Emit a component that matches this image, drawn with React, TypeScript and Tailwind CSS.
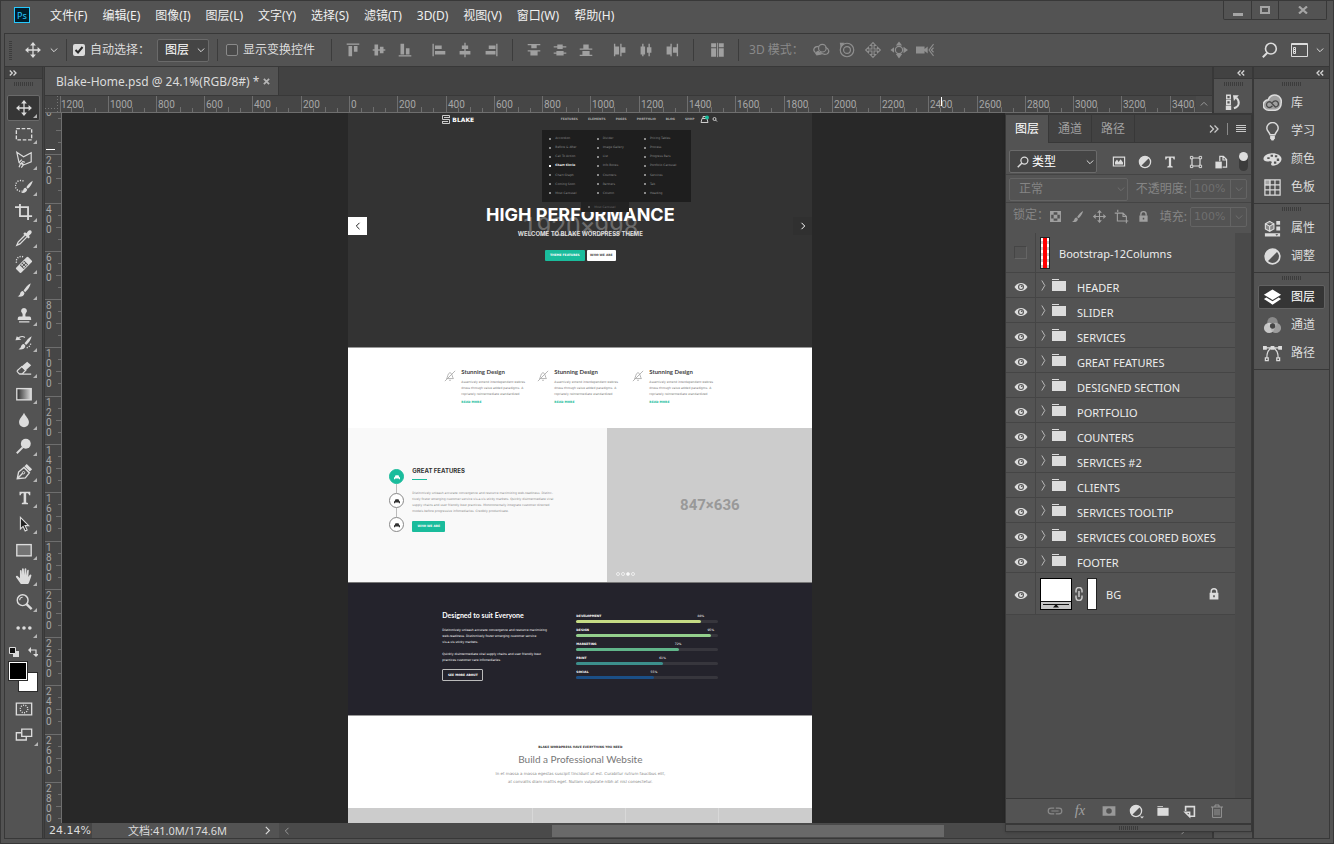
import React from 'react';

type IconProps = { className?: string; children: React.ReactNode };

// 20x20 stroke/fill drawing that takes the text colour
const Glyph: React.FC<IconProps> = ({ className = 'size-5', children }) => (
    <svg viewBox="0 0 20 20" className={`${className} shrink-0`} fill="none" stroke="currentColor" strokeWidth="1.5" aria-hidden="true">
        {children}
    </svg>
);

const solid = { fill: 'currentColor', stroke: 'none' };

const MoveShape = () => (
    <g>
        <path d="M10 4v12M4 10h12" strokeWidth="1.4" />
        <path {...solid} d="M10 1.200l3.200 3.700H6.800zM10 18.800l3.200-3.700H6.800zM1.200 10l3.700-3.200v6.400zM18.800 10l-3.700-3.200v6.400z" />
    </g>
);

const BrushShape = () => (
    <path {...solid} d="M17.500 2.500c-3 1.500-6 5-8 8l1.800 1.900c2.800-2.300 5.500-6.200 6.200-9.900zM8.800 11.200c-2 .2-2.800 1.600-3.200 3.200-.3 1.200-1.200 2-2.800 2.600 3 1 7.200.3 7.800-3.800z" />
);

const TypeShape = () => <path {...solid} d="M4 3h12v4h-1.400c-.3-1.600-.8-2.200-2.400-2.200H11.400v9.400c0 1 .5 1.200 2 1.300V17H6.600v-1.500c1.500-.1 2-.3 2-1.300V4.800H7.800C6.200 4.800 5.700 5.400 5.400 7H4z" />;

const FolderShape = () => (
    <g {...solid}>
        <path d="M3 4h7v1H3z" />
        <path d="M3 6h14v10H3z" />
    </g>
);

const HalfCircleShape = () => (
    <g>
        <circle cx="10" cy="10" r="7" strokeWidth="1.600" />
        <path {...solid} d="M5 15A7 7 0 0 1 15 5z" />
    </g>
);

const LockShape = () => (
    <g>
        <path d="M6.500 9V7a3.500 3.500 0 0 1 7 0v2" strokeWidth="1.800" />
        <path {...solid} fillRule="evenodd" d="M4.500 8.500h11V17h-11zM9 11.500v2.500h2v-2.500z" />
    </g>
);

const Chevron: React.FC<{ className?: string }> = ({ className = 'size-2' }) => (
    <svg viewBox="0 0 8 8" className={`${className} shrink-0`} fill="none" stroke="currentColor" strokeWidth="1" aria-hidden="true">
        <path d="M.8 2.500L4 5.700l3.200-3.200" />
    </svg>
);

const Grip = () => (
    <div className="mx-auto flex h-1 gap-px" aria-hidden="true">
        {Array.from({ length: 10 }, (_, i) => (
            <i key={i} className="h-1 w-px bg-[#3c3c3c]" />
        ))}
    </div>
);

const DoubleArrow: React.FC<{ flip?: boolean }> = ({ flip }) => (
    <svg viewBox="0 0 8 6" className="h-[6px] w-2" fill="none" stroke="#d6d6d6" strokeWidth="1.300" aria-hidden="true">
        <path d={flip ? 'M3.500.5L1 3l2.500 2.500M7.200.5L4.700 3l2.500 2.500' : 'M.8.5L3.300 3 .8 5.500M4.500.5L7 3 4.500 5.500'} />
    </svg>
);

const menus = ['文件(F)', '编辑(E)', '图像(I)', '图层(L)', '文字(Y)', '选择(S)', '滤镜(T)', '3D(D)', '视图(V)', '窗口(W)', '帮助(H)'];

const MenuBar = () => (
    <header className="flex h-8 shrink-0 items-start">
        <div className="ml-[10px] mt-[6px] flex h-4 w-4 items-center justify-center border border-[#26c9ff] bg-[#001d2b] text-[9px] leading-none text-[#26c9ff]">Ps</div>
        <nav className="ml-[13px] flex gap-px">
            {menus.map((menu) => (
                <button key={menu} className="h-[30px] px-[7px] text-[#f0f0f0]">
                    {menu}
                </button>
            ))}
        </nav>
        <div className="ml-auto mr-[3px] flex h-[19px] divide-x divide-[#383838] rounded-b-xs border border-t-0 border-[#383838] text-[#a5a5a5]">
            <button aria-label="最小化" className="flex w-[28px] items-center justify-center pt-2">
                <i className="h-[3px] w-[10px] bg-current" />
            </button>
            <button aria-label="最大化" className="flex w-[27px] items-center justify-center">
                <i className="h-2 w-[10px] border-2 border-current" />
            </button>
            <button aria-label="关闭" className="flex w-[47px] items-center justify-center">
                <svg viewBox="0 0 10 8" className="h-2 w-[10px]" stroke="currentColor" strokeWidth="2.200">
                    <path d="M1 .5l8 7M9 .5l-8 7" />
                </svg>
            </button>
        </div>
    </header>
);

const alignIcons: React.ReactNode[] = [
    <g key="t"><path d="M3 3.500h14" /><path {...solid} d="M5 5.500h4V17H5zM11 5.500h4V12h-4z" /></g>,
    <g key="m"><path d="M3 10h14" /><path {...solid} d="M5 4h4v12H5zM11 6.500h4v7h-4z" /></g>,
    <g key="b"><path d="M3 16.500h14" /><path {...solid} d="M5 3h4v12H5zM11 8h4v7h-4z" /></g>,
    <g key="l"><path d="M3.500 3v14" /><path {...solid} d="M5.500 5H13v4H5.500zM5.500 11H17v4H5.500z" /></g>,
    <g key="c"><path d="M10 2v16" /><path {...solid} d="M6.500 5h7v4h-7zM4 11h12v4H4z" /></g>,
    <g key="r"><path d="M16.500 3v14" /><path {...solid} d="M7.500 5h7.500v4H7.500zM4 11h11v4H4z" /></g>,
];

const distributeIcons: React.ReactNode[] = [
    <g key="t"><path d="M3 4h14M3 11h14" /><path {...solid} d="M7 4h6v4H7zM6 11h8v5H6z" /></g>,
    <g key="v"><path d="M3 6.500h14M3 13.500h14" /><path {...solid} d="M7 4h6v5H7zM6 11h8v5H6z" /></g>,
    <g key="b"><path d="M3 9h14M3 16h14" /><path {...solid} d="M7 4h6v5H7zM6 11h8v5H6z" /></g>,
    <g key="l"><path d="M4 3v14M11 3v14" /><path {...solid} d="M4 6h5v9H4zM11 7h5v6h-5z" /></g>,
    <g key="h"><path d="M6.500 3v14M13.500 3v14" /><path {...solid} d="M4 6h5v9H4zM11 7h5v6h-5z" /></g>,
    <g key="r"><path d="M9 3v14M16 3v14" /><path {...solid} d="M4 6h5v9H4zM11 7h5v6h-5z" /></g>,
];

const modeIcons: React.ReactNode[] = [
    <g key="orbit" strokeWidth="1.300"><circle cx="11.500" cy="8" r="4.200" /><path d="M7.500 6C2 6 .5 10 3.500 12.500M15 7c4 1.500 5 5.500 1.500 7.500-3 1-6-.5-7.500-2.500" /><path {...solid} d="M3 13l4-2.500 4 4.500-6 1z" /></g>,
    <g key="roll" strokeWidth="1.300"><circle cx="10" cy="10" r="7.500" /><circle cx="10" cy="10" r="3.800" /><path {...solid} d="M2 2h5l-4 6z" /></g>,
    <g key="pan" strokeWidth="1.200"><path d="M8.800 8.800V5H7l3-3.200L13 5h-1.800v3.800H15V7l3.200 3-3.200 3v-1.800h-3.800V15H13l-3 3.200L7 15h1.800v-3.800H5V13l-3.200-3L5 7v1.800z" /></g>,
    <g key="slide" strokeWidth="1.300"><circle cx="10" cy="10" r="4" /><path {...solid} d="M6.500 5h7L10 .5zM4.500 7v6L.5 10zM15 6.500v7l5-3.500zM6.500 14.500h7L10 19.500z" /></g>,
    <g key="cam" strokeWidth="1.200"><path {...solid} d="M0 6h9.500v3L13 6v8l-3.500-3v3H0z" /><path d="M19.500 3.500L14.500 10l5 6.500M19.500 7.500L17 10l2.500 2.500" /></g>,
];

const Divider = () => <i className="block h-[22px] w-px shrink-0 bg-[#3c3c3c]" aria-hidden="true" />;

const OptionsBar = () => (
    <section className="flex h-[34px] shrink-0 items-center border border-[#383838]">
        <div className="ml-1 flex flex-col gap-px" aria-hidden="true">
            {Array.from({ length: 10 }, (_, i) => (
                <i key={i} className="h-px w-[3px] bg-[#3c3c3c]" />
            ))}
        </div>
        <button aria-label="移动工具" className="ml-3 flex items-center gap-2">
            <Glyph className="size-[18px]"><MoveShape /></Glyph>
            <Chevron />
        </button>
        <div className="ml-2 flex items-center"><Divider /></div>
        <label className="ml-[6px] flex items-center gap-[5px]">
            <span className="relative flex">
                <input type="checkbox" defaultChecked className="size-3 appearance-none rounded-xs bg-[#dcdcdc]" />
                <svg viewBox="0 0 12 12" className="pointer-events-none absolute inset-0 size-3" fill="none" stroke="#2b2b2b" strokeWidth="2">
                    <path d="M2.500 6L5 8.500l4.500-5.500" />
                </svg>
            </span>
            自动选择：
        </label>
        <span className="relative ml-[7px] flex items-center">
            <select aria-label="自动选择对象" className="h-[23px] w-[52px] appearance-none rounded-xs border border-[#6a6a6a] bg-[#454545] pl-[7px] text-white">
                <option>图层</option>
                <option>组</option>
            </select>
            <Chevron className="pointer-events-none absolute right-1 size-2" />
        </span>
        <div className="ml-2"><Divider /></div>
        <label className="ml-2 flex items-center gap-[5px]">
            <input type="checkbox" className="size-3 appearance-none rounded-xs border border-[#8a8a8a] bg-[#4a4a4a]" />
            显示变换控件
        </label>
        <div className="ml-4"><Divider /></div>
        <div className="ml-3 flex gap-2 text-[#a0a0a0]">
            {alignIcons.map((icon, i) => (
                <button key={i} aria-label="对齐" className={i === 3 ? 'ml-2' : ''}>
                    <Glyph className="size-[18px]">{icon}</Glyph>
                </button>
            ))}
        </div>
        <div className="ml-3"><Divider /></div>
        <div className="ml-3 flex gap-2 text-[#a0a0a0]">
            {distributeIcons.map((icon, i) => (
                <button key={i} aria-label="分布" className={i === 3 ? 'ml-2' : ''}>
                    <Glyph className="size-[18px]">{icon}</Glyph>
                </button>
            ))}
        </div>
        <div className="ml-3"><Divider /></div>
        <button aria-label="自动对齐图层" className="mr-3 ml-[14px] text-[#a0a0a0]">
            <Glyph className="size-[18px]">
                <path d="M10.500 2v16" strokeWidth="1" />
                <path {...solid} d="M3.500 2.500H9V7H3.500zM3.500 8H9v9.500H3.500zM12 2.500h5.500V7H12zM12 8h5.500v9.500H12z" />
            </Glyph>
        </button>
        <Divider />
        <span className="ml-[10px] text-[#8a8a8a]">3D 模式：</span>
        <div className="ml-2 flex gap-2 text-[#8f8f8f]">
            {modeIcons.map((icon, i) => (
                <button key={i} aria-label="3D 模式">
                    <Glyph className="size-[18px]">{icon}</Glyph>
                </button>
            ))}
        </div>
        <div className="ml-auto mr-[5px] flex items-center gap-3">
            <button aria-label="搜索">
                <Glyph className="size-[18px]">
                    <circle cx="11" cy="8.500" r="6" strokeWidth="1.800" />
                    <path d="M7 13L2 18" strokeWidth="2.200" />
                </Glyph>
            </button>
            <button aria-label="工作区" className="flex items-center gap-2">
                <svg viewBox="0 0 17 14" className="h-[14px] w-[17px]" fill="none" stroke="currentColor">
                    <path d="M.5 .5h16v13H.5zM.5 1.500h16M2.500 4.500h2v2h-2zM2.500 6.500h2v4h-2zM2.500 8.500h2" />
                </svg>
                <Chevron />
            </button>
        </div>
    </section>
);

const tools: { name: string; art: React.ReactNode }[] = [
    { name: '移动', art: <MoveShape /> },
    { name: '矩形选框', art: <path d="M1.500 4h17v12.500h-17z" strokeDasharray="4 1.900" /> },
    { name: '多边形套索', art: <path d="M2 1.500l7.500 5L18 2v10l-8.500 3.500L4.500 13zM4.500 13l3-3.500M7 12.500L9.500 15 7 18.500M6 14.500L4.500 18M8 11.500l3 1" strokeWidth="1.300" /> },
    { name: '快速选择', art: <g><path d="M8.500 15.500A6 6 0 1 1 10 5" strokeDasharray="1.300 1.500" /><g transform="translate(4 2) scale(.9)"><BrushShape /></g></g> },
    { name: '裁剪', art: <path d="M5.500 1v13.500H19M0 4.500h14.500V19" strokeWidth="2" /> },
    { name: '吸管', art: <g><path d="M11 7L3.500 14.500 2 18l3.500-1.500L13 9" strokeWidth="1.400" /><path {...solid} d="M9.500 5l1.500-1.500 1.800 1.200c1-1.700 2.400-3.600 4.200-3.200 1.700.6 2.100 2.400.8 3.800L15.500 7.500l1 1.700-1.600 1.400-5.600-5z" /></g> },
    { name: '修复画笔', art: <g><path d="M9 2A5.500 5.500 0 0 0 2 9.500" strokeDasharray="1.300 1.400" /><g transform="rotate(-45 10 11)"><path {...solid} fillRule="evenodd" d="M2 7h16a1.500 1.500 0 0 1 1.500 1.500v5A1.500 1.500 0 0 1 18 15H2a1.500 1.500 0 0 1-1.500-1.500v-5A1.500 1.500 0 0 1 2 7zM6.500 8v6h7V8z" /><circle {...solid} cx="8.500" cy="9.500" r="1.100" /><circle {...solid} cx="11.500" cy="9.500" r="1.100" /><circle {...solid} cx="8.500" cy="12.500" r="1.100" /><circle {...solid} cx="11.500" cy="12.500" r="1.100" /></g></g> },
    { name: '画笔', art: <BrushShape /> },
    { name: '仿制图章', art: <path {...solid} d="M10 1a3.300 3.300 0 0 1 2.200 5.700c-.8 1-.8 2.300-.5 3.800H16c1.500 0 2 1 2 4H3c0-3 .5-4 2-4h3.300c.3-1.500.3-2.800-.5-3.800A3.300 3.300 0 0 1 10 1zM4.500 15.800h11.500v1.400H4.500z" /> },
    { name: '历史记录画笔', art: <g><g transform="translate(1 1)"><BrushShape /></g><path d="M3 6c3-2.500 6-2.500 8-1" strokeWidth="1.300" /><path {...solid} d="M.5 8L2 3.500 7 7.500z" /><path d="M13 16.500a6 6 0 0 0 4.500-6" strokeDasharray="1.300 1.400" /></g> },
    { name: '橡皮擦', art: <g><path {...solid} d="M7 8.500L13.500 3l4.500 4-6.500 6z" /><path d="M7.500 8.500L3 12.500c-.8.8-.8 1.300 0 2l1.800 2h3.200L12 12.500zM5 16.800h13" strokeWidth="1.300" /></g> },
    {
        name: '渐变',
        art: (
            <g>
                <linearGradient id="ramp">
                    <stop offset="0" stopColor="#2b2b2b" />
                    <stop offset="1" stopColor="#dcdcdc" />
                </linearGradient>
                <rect x="2" y="4" width="16" height="12.500" fill="url(#ramp)" />
            </g>
        ),
    },
    { name: '模糊', art: <path {...solid} d="M10 2c1.500 4 5.500 6.500 5.500 10.500a5.500 5.500 0 0 1-11 0C4.500 8.500 8.500 6 10 2z" /> },
    { name: '减淡', art: <g><circle {...solid} cx="12" cy="7.500" r="5.500" /><path d="M8.500 11.500L2 18" strokeWidth="2.200" /></g> },
    { name: '钢笔', art: <g><path d="M2.500 17.500L4 10l6-5 6 6-4.500 5.500zM2.500 17.500l6-6" strokeWidth="1.500" /><circle cx="9.500" cy="10.800" r="1.300" strokeWidth="1.100" /><path {...solid} d="M10.500 3.500L13 1l6 6-2.500 2.500z" /></g> },
    { name: '文字', art: <g transform="translate(1 0)"><TypeShape /></g> },
    { name: '路径选择', art: <path d="M6 2.500v13l3-2.800 2.300 5 2.200-1-2.300-4.900h4z" fill="#222" strokeWidth="1.200" /> },
    { name: '矩形', art: <rect x="2" y="4" width="16" height="12.500" fill="#747474" /> },
    { name: '抓手', art: <path {...solid} d="M6.500 19L1.200 11.500c-.7-1.200.5-2.300 1.700-1.400L5.500 12.500V4.300c0-1.400 1.800-1.400 1.900 0l.4 4.700V2.500c0-1.500 1.900-1.500 2 0l.4 6.500.5-6.700c.2-1.400 1.900-1.300 1.900.1V9.500l.9-5.500c.3-1.300 1.900-1.100 1.800.3L14.800 11l1.400-2c.9-1.300 2.400-.5 1.900.9-1.100 3-1.900 6.800-3.500 9.100z" /> },
    { name: '缩放', art: <g><circle cx="8.500" cy="8" r="6" strokeWidth="1.600" /><path d="M12.800 12.300l5.700 5.700" strokeWidth="2.600" /><path d="M5.200 8a3.300 3.300 0 0 1 3.300-3.300" strokeWidth="1.200" /></g> },
    { name: '编辑工具栏', art: <path {...solid} d="M1.500 10a2 2 0 1 1 4 0 2 2 0 0 1-4 0M8 10a2 2 0 1 1 4 0 2 2 0 0 1-4 0M14.500 10a2 2 0 1 1 4 0 2 2 0 0 1-4 0" /> },
];

const Corner = () => <i className="absolute right-[2px] bottom-[2px] border-[2px] border-t-transparent border-l-transparent border-r-[#b5b5b5] border-b-[#b5b5b5]" aria-hidden="true" />;

const ToolBar = () => (
    <aside className="flex w-[39px] shrink-0 flex-col border-x border-[#383838]">
        <div className="flex h-3 items-center border-b border-[#383838] bg-[#424242] pl-1">
            <DoubleArrow />
        </div>
        <div className="mt-[3px] mb-[9px] flex"><Grip /></div>
        <div className="flex flex-col px-[2px]">
            {tools.map((tool, i) => (
                <button
                    key={tool.name}
                    aria-label={tool.name}
                    className={`relative flex h-[26px] items-center justify-center rounded-xs border ${i === 0 ? 'border-[#6a6a6a] bg-[#363636]' : 'border-transparent'}`}
                >
                    <Glyph className="size-[18px]">{tool.art}</Glyph>
                    <Corner />
                </button>
            ))}
        </div>
        <div className="mt-[6px] flex justify-between px-1">
            <button aria-label="默认颜色">
                <svg viewBox="0 0 10 10" className="size-[10px]">
                    <path d="M4 4h6v6H4z" fill="#dcdcdc" />
                    <path d="M.5.5h6v6h-6z" fill="#111" stroke="#dcdcdc" />
                </svg>
            </button>
            <button aria-label="切换颜色">
                <svg viewBox="0 0 10 10" className="size-[10px]" fill="none" stroke="currentColor" strokeWidth="1.200">
                    <path d="M2 3h6v5" />
                    <path d="M3 0v6L0 3zM5 7h6L8 10z" {...solid} />
                </svg>
            </button>
        </div>
        <div className="relative mt-[5px] ml-[3px] h-[30px]">
            <button aria-label="背景色" className="absolute top-[10px] left-[10px] size-5 border border-[#2b2b2b] bg-white" />
            <button aria-label="前景色" className="absolute top-0 left-px size-[18px] border border-white bg-black outline outline-[#2b2b2b]" />
        </div>
        <button aria-label="快速蒙版" className="mx-[2px] mt-1 flex h-[26px] items-center justify-center">
            <Glyph className="size-[18px]">
                <path d="M1.500 3.500h17v13h-17z" />
                <circle cx="10" cy="10" r="4.200" strokeDasharray="1.200 1.400" />
            </Glyph>
        </button>
        <button aria-label="屏幕模式" className="relative mx-[2px] flex h-[26px] items-center justify-center">
            <Glyph className="size-[18px]">
                <path d="M7.500 3.500h11v8h-11z" />
                <path d="M7.500 7.500h-6v8h11v-4" />
            </Glyph>
            <Corner />
        </button>
    </aside>
);

// canvas pixels between two labelled ruler marks (200 document px at 24.14%)
const STEP = 48.28;

const TopRuler = () => (
    <svg className="h-4 min-w-0 flex-1 bg-[#464646]" aria-hidden="true">
        {Array.from({ length: 24 }, (_, i) => {
            const x = Math.round(288 + (i - 6) * STEP);
            return (
                <g key={i} stroke="#6e6e6e" fill="#a6a6a6" fontSize="10">
                    <path d={`M${x + 0.5} 0v16M${x + 12.5} 12v4M${x + 24.5} 11v5M${x + 36.5} 12v4`} />
                    <text x={x + 2} y="12" stroke="none">
                        {Math.abs(i - 6) * 200}
                    </text>
                </g>
            );
        })}
        <path d="M880.500 1v9" stroke="#fff" />
    </svg>
);

const SideRuler = () => (
    <svg className="h-full w-4 shrink-0 bg-[#464646]" aria-hidden="true">
        {Array.from({ length: 15 }, (_, i) => {
            const y = Math.round(i * STEP - 7);
            return (
                <g key={i} stroke="#6e6e6e" fill="#a6a6a6" fontSize="10">
                    <path d={`M0 ${y + 0.5}h16M13 ${y + 12.5}h3M11 ${y + 24.5}h5M13 ${y + 36.5}h3`} />
                    {String(i * 200).split('').map((digit, n) => (
                        <text key={n} x="1" y={y + 10 + n * 10} stroke="none">
                            {digit}
                        </text>
                    ))}
                </g>
            );
        })}
        <path d="M1 36.500h9" stroke="#fff" />
    </svg>
);

const dropdown = [
    ['Accordion', 'Before & After', 'Call To Action', 'Chart Circle', 'Chart Graph', 'Coming Soon', 'Most Carousel'],
    ['Divider', 'Image Gallery', 'List', 'Info Boxes', 'Counters', 'Partners', 'Column'],
    ['Pricing Tables', 'Process', 'Progress Bars', 'Portfolio Carousel', 'Services', 'Tab', 'Heading'],
];

const Hero = () => (
    <section className="relative flex h-[234px] flex-col items-center bg-[#333] text-white">
        <div className="flex h-[13px] w-full items-center pr-[94px] pl-[94px]">
            <svg viewBox="0 0 8 9" className="h-[9px] w-2" fill="none" stroke="#ccc">
                <path d="M7.500 2.500v-2h-7v4h7v4h-7v-2M2 2.500h6M0 6.500h6" />
            </svg>
            <b className="ml-[2px] text-[6px] leading-none">BLAKE</b>
            <nav className="ml-auto flex gap-[10px] text-[3px] leading-none font-bold text-[#aaa]">
                {['FEATURES', 'ELEMENTS', 'PAGES', 'PORTFOLIO', 'BLOG', 'SHOP'].map((item) => (
                    <a key={item} href="#page">{item}</a>
                ))}
            </nav>
            <svg viewBox="0 0 18 9" className="ml-[6px] h-[9px] w-[18px]" fill="none" stroke="#ccc">
                <path d="M1 7.500h7l-1-4H2zM3 3.500v-2h3v2" />
                <circle cx="7" cy="2.500" r="2" fill="#1abc9c" stroke="none" />
                <circle cx="14.500" cy="4" r="1.500" />
                <path d="M15.500 5l1.500 1.500" />
            </svg>
        </div>
        <div className="flex w-full flex-1 items-start justify-between">
            <button aria-label="Previous" className="mt-[91px] flex h-[18px] w-[19px] items-center justify-center bg-white text-[#222]">
                <Chevron className="size-2 rotate-90" />
            </button>
            <button aria-label="Next" className="mt-[91px] flex h-[18px] w-[19px] items-center justify-center bg-[#303030] text-white">
                <Chevron className="size-2 -rotate-90" />
            </button>
        </div>
        <p className="absolute top-[98px] w-full text-center font-['Roboto',sans-serif] text-[26px] leading-8 text-[#6c6c6c]">1920×998</p>
        <div className="absolute top-[92px] flex flex-col items-center font-bold">
            <h1 className="font-['Inter',sans-serif] text-[18px] leading-5">HIGH PERFORMANCE</h1>
            <p className="mt-[5px] font-['Inter',sans-serif] text-[6px] leading-2 text-[#ddd]">WELCOME TO BLAKE WORDPRESS THEME</p>
            <div className="mt-3 flex gap-[2px] text-[3px] leading-none">
                <button className="h-[11px] w-10 rounded-[1px] bg-[#1abc9c]">THEME FEATURES</button>
                <button className="h-[11px] w-[29px] rounded-[1px] bg-white text-[#444]">WHO WE ARE</button>
            </div>
        </div>
        <div className="absolute top-[17px] left-[194px]">
            <div className="grid h-[72px] w-[149px] grid-cols-3 bg-[#1e1e1e] py-1 pl-[7px]">
                {dropdown.map((column, c) => (
                    <ul key={c} className="flex flex-col justify-around text-[3px] leading-none text-[#8a8a8a]">
                        {column.map((entry) => (
                            <li key={entry} className={`flex items-center gap-1 whitespace-nowrap ${entry === 'Chart Circle' ? 'font-bold text-white' : ''}`}>
                                <i className="size-[2px] bg-current" />
                                {entry}
                            </li>
                        ))}
                    </ul>
                ))}
            </div>
            <div className="ml-[39px] flex h-[10px] w-12 items-center gap-1 bg-[#222] pl-[7px] text-[3px] leading-none text-[#666]">
                <i className="size-[2px] bg-current" />
                Most Carousel
            </div>
        </div>
    </section>
);

const Services = () => (
    <section className="grid h-[81px] grid-cols-[93px_95px_auto] border-t border-[#999] bg-white pt-5 pl-24">
        {[0, 1, 2].map((n) => (
            <article key={n} className="flex items-start gap-[5px]">
                <svg viewBox="0 0 14 14" className="mt-[2px] size-3" fill="none" stroke="#aaa">
                    <path d="M3 10c1.500-1.500 1-6 4-7 3 1 2.500 5.500 4 7zM6 12h2M1 13L13 1" />
                </svg>
                <div className="whitespace-nowrap">
                    <h3 className="font-['Lato',sans-serif] text-[6px] leading-[7px] font-bold text-[#444]">Stunning Design</h3>
                    <p className="mt-1 text-[3px] leading-[6px] text-[#777]">
                        Assertively extend interdependent webres
                        <br />
                        dness through value added paradigms. A
                        <br />
                        ropriately reintermediate standardized
                    </p>
                    <a href="#page" className="mt-[2px] block text-[3px] leading-[6px] font-bold text-[#1abc9c]">READ MORE</a>
                </div>
            </article>
        ))}
    </section>
);

const CarBadge: React.FC<{ active?: boolean }> = ({ active }) => (
    <div className={`flex size-[15px] items-center justify-center rounded-full border ${active ? 'border-[#1abc9c] bg-[#1abc9c] text-white' : 'border-[#888] bg-white text-[#333]'}`}>
        <svg viewBox="0 0 8 8" className="size-[6px]" fill="currentColor">
            <path d="M2 1.500h4l1 2.500 1 .5V7H6.500V6h-5v1H0V4.500L1 4z" />
        </svg>
    </div>
);

const GreatFeatures = () => (
    <section className="flex h-[154px]">
        <div className="flex flex-1 items-start gap-2 bg-[#f9f9f9] pl-[41px]">
            <div className="flex flex-col items-center pt-[41px]">
                <CarBadge active />
                <i className="h-[9px] w-px bg-[#bbb]" />
                <CarBadge />
                <i className="h-[9px] w-px bg-[#bbb]" />
                <CarBadge />
            </div>
            <div className="pt-[39px] whitespace-nowrap">
                <h2 className="font-['Inter',sans-serif] text-[6px] leading-2 font-bold text-[#333]">GREAT FEATURES</h2>
                <i className="mt-1 block h-px w-[15px] bg-[#1abc9c]" />
                <p className="mt-[10px] text-[3px] leading-[6px] text-[#888]">
                    Distinctively unleash accurate convergence and resource maximizing web-readiness. Distinc-
                    <br />
                    tively foster emerging customer service vis-a-vis sticky markets. Quickly disintermediate viral
                    <br />
                    supply chains and user friendly best practices. Monotonectally integrate customer directed
                    <br />
                    models before progressive infomediaries. Credibly productivate.
                </p>
                <button className="mt-[7px] block h-[11px] w-[33px] rounded-[1px] bg-[#1abc9c] text-[3px] leading-none font-bold text-white">WHO WE ARE</button>
            </div>
        </div>
        <div className="relative flex w-[205px] items-center justify-center bg-[#ccc] font-['Roboto',sans-serif] text-[15px] font-bold text-[#999]">
            847×636
            <div className="absolute bottom-[6px] left-[9px] flex gap-px">
                {[0, 1, 2, 3].map((n) => (
                    <i key={n} className={`size-1 rounded-full border border-[#eee] ${n === 2 ? 'bg-white' : ''}`} />
                ))}
            </div>
        </div>
    </section>
);

const skills = [
    { label: 'DEVELOPMENT', value: 88, color: '#c5db84' },
    { label: 'DESIGN', value: 95, color: '#93cf8c' },
    { label: 'MARKETING', value: 72, color: '#61b58a' },
    { label: 'PRINT', value: 61, color: '#3c8f8c' },
    { label: 'SOCIAL', value: 55, color: '#1b4f86' },
];

const Designed = () => (
    <section className="flex h-[133px] gap-[20px] border-t border-[#777] bg-[#24232c] pr-[94px] pl-[94px] text-white">
        <div className="w-[114px] pt-[28px] whitespace-nowrap">
            <h2 className="font-['Lato',sans-serif] text-[7px] leading-2 font-bold">Designed to suit Everyone</h2>
            <p className="mt-2 text-[3px] leading-[6px]">
                Distinctively unleash accurate convergence and resource maximizing
                <br />
                web-readiness. Distinctively foster emerging customer service
                <br />
                vis-a-vis sticky markets.
            </p>
            <p className="mt-[6px] text-[3px] leading-[6px]">
                Quickly disintermediate viral supply chains and user friendly best
                <br />
                practices customer care infomediaries.
            </p>
            <button className="mt-[6px] block h-3 w-[41px] rounded-[1px] border border-[#bbb] text-[3px] leading-none font-bold">SEE MORE ABOUT</button>
        </div>
        <div className="flex flex-1 flex-col gap-[5px] pt-[31px]">
            {skills.map(({ label, value, color }) => (
                <div key={label}>
                    <div className="flex justify-between text-[3px] leading-1 font-bold">
                        <span>{label}</span>
                        <span className="text-right font-normal" style={{ marginRight: `${98 - value}%` }}>{value}%</span>
                    </div>
                    <div className="mt-[2px] h-[3px] rounded-full bg-[#37363d]">
                        <div className="h-[3px] rounded-full" style={{ width: `${value}%`, backgroundColor: color }} />
                    </div>
                </div>
            ))}
        </div>
    </section>
);

const Professional = () => (
    <section className="h-[93px] border-t border-[#999] bg-white pt-7 text-center">
        <p className="text-[3px] leading-[6px] font-bold text-[#333]">BLAKE WORDPRESS HAVE EVERYTHING YOU NEED</p>
        <h2 className="mt-[3px] font-['Lato',sans-serif] text-[10px] leading-3 text-[#777]">Build a Professional Website</h2>
        <p className="mt-[5px] text-[4px] leading-2 text-[#888]">
            In et massa a massa egestas suscipit tincidunt ut est. Curabitur rutrum faucibus elit,
            <br />
            at convallis diam mattis eget. Nullam vulputate nibh at nisl consectetur.
        </p>
    </section>
);

const Artwork = () => (
    <div id="page" className="ml-[24.9%] w-[464px] shrink-0 font-['DejaVu_Sans',sans-serif]">
        <Hero />
        <Services />
        <GreatFeatures />
        <Designed />
        <Professional />
        <div className="grid h-20 grid-cols-[185px_93px_93px_93px] divide-x divide-[#d8d8d8] bg-[#ccc]">
            <i /><i /><i /><i />
        </div>
    </div>
);

const Workspace = () => (
    <main className="flex min-w-0 flex-1 flex-col border-r border-[#383838]">
        <div className="flex h-[28px] shrink-0 bg-[#424242]">
            <div className="flex items-center gap-1 border-r border-[#383838] bg-[#535353] pt-px pr-2 pl-[11px]">
                Blake-Home.psd @ 24.1%(RGB/8#) *
                <button aria-label="关闭文档">
                    <svg viewBox="0 0 8 8" className="size-[7px]" stroke="#b5b5b5" strokeWidth="2">
                        <path d="M1 1l6 6M7 1L1 7" />
                    </svg>
                </button>
            </div>
        </div>
        <div className="flex h-[18px] shrink-0 border-y border-t-[#383838] border-b-[#6e6e6e] bg-[#464646] font-['Roboto',sans-serif]">
            <svg className="h-4 w-4 shrink-0 border-r border-[#6e6e6e]" stroke="#777" strokeDasharray="1 2" aria-hidden="true">
                <path d="M0 12.500h16M12.500 0v16" />
            </svg>
            <TopRuler />
            <div className="flex w-4 items-center justify-center bg-[#4a4a4a] text-[#999]">
                <Chevron className="size-2 rotate-180" />
            </div>
        </div>
        <div className="flex min-h-0 flex-1">
            <div className="flex shrink-0 border-r border-[#6e6e6e] font-['Roboto',sans-serif]"><SideRuler /></div>
            <div className="flex min-w-0 flex-1 items-start overflow-hidden bg-[#282828]">
                <Artwork />
            </div>
        </div>
        <footer className="flex h-[15px] shrink-0 items-center bg-[#4a4a4a] text-[11px] leading-none">
            <span className="flex h-full w-[47px] items-center bg-[#454545] pl-1 font-['DejaVu_Sans',sans-serif]">24.14%</span>
            <div className="flex h-full w-[187px] items-center justify-between bg-[#535353] pr-[7px] pl-9">
                文档:41.0M/174.6M
                <Chevron className="size-[9px] -rotate-90" />
            </div>
            <div className="flex h-full flex-1 items-center text-[#999]">
                <Chevron className="ml-1 size-2 rotate-90" />
                <div className="ml-[28%] h-3 w-[42%] bg-[#696969]" />
                <Chevron className="mr-[25px] ml-auto size-2 -rotate-90" />
            </div>
        </footer>
    </main>
);

const Eye = () => (
    <svg viewBox="0 0 14 10" className="h-[10px] w-[14px]" aria-hidden="true">
        <path fillRule="evenodd" d="M.5 5C2 2.300 4.500 1 7 1s5 1.300 6.500 4C12 7.700 9.500 9 7 9S2 7.700.5 5zM7 2a3 3 0 1 0 0 6 3 3 0 0 0 0-6z" fill="#dcdcdc" />
        <circle cx="7" cy="5" r="1.900" fill="#dcdcdc" />
        <circle cx="7.700" cy="4.300" r=".8" fill="#444" />
    </svg>
);

const groups = ['HEADER', 'SLIDER', 'SERVICES', 'GREAT FEATURES', 'DESIGNED SECTION', 'PORTFOLIO', 'COUNTERS', 'SERVICES #2', 'CLIENTS', 'SERVICES TOOLTIP', 'SERVICES COLORED BOXES', 'FOOTER'];

const filterIcons: [string, React.ReactNode][] = [
    ['像素图层', <g key="p"><path d="M3 4h14v11H3z" /><path {...solid} d="M5 13V10l2.500-3 2 3L12 6.500l3 4V13z" /></g>],
    ['调整图层', <HalfCircleShape key="a" />],
    ['文字图层', <TypeShape key="t" />],
    ['形状图层', <g key="s"><path d="M5 5h10v10H5z" /><path d="M3 3h3v3H3zM14 3h3v3h-3zM3 14h3v3H3zM14 14h3v3h-3z" fill="#535353" strokeWidth="1.200" /></g>],
    ['智能对象', <g key="o"><path d="M8.500 9V3H13l4 4v9.500h-5M12.500 3v4.500H17" /><path {...solid} d="M3 9.500h8V18H3z" /></g>],
];

const lockIcons: [string, React.ReactNode][] = [
    ['锁定透明像素', <g key="t"><path d="M3.500 3.500h13v13h-13z" /><path {...solid} d="M3 3h4.500v4.500H3zM12.500 3H17v4.500h-4.500zM7.500 7.500h5v5h-5zM3 12.500h4.500V17H3zM12.500 12.500H17V17h-4.500z" /></g>],
    ['锁定图像像素', <BrushShape key="i" />],
    ['锁定位置', <MoveShape key="m" />],
    ['防止嵌套', <path key="n" d="M5 1v3M1 5.500h11l4 4M4.500 5v11H19M16.500 9v10M12 5v5h4" />],
    ['锁定全部', <LockShape key="l" />],
];

const actionIcons: [string, React.ReactNode, string][] = [
    ['链接图层', <path key="l" d="M9 13.500H5a3.500 3.500 0 0 1 0-7h4M11 6.500h4a3.500 3.500 0 0 1 0 7h-4M5.500 10h9" strokeWidth="1.500" />, 'text-[#8a8a8a]'],
    ['添加图层样式', <text key="f" x="1" y="15" {...solid} fontSize="18" fontStyle="italic" fontFamily="Liberation Serif, serif">fx</text>, 'text-[#a0a0a0]'],
    ['添加蒙版', <path key="m" {...solid} fillRule="evenodd" d="M2 4h16v12H2zM10 6.500a3.500 3.500 0 1 0 0 7 3.500 3.500 0 0 0 0-7z" />, 'text-[#999]'],
    ['创建调整图层', <g key="a"><HalfCircleShape /><path {...solid} d="M15 17h5l-2.500 2.500z" /></g>, ''],
    ['创建新组', <FolderShape key="g" />, ''],
    ['创建新图层', <path key="n" d="M4.500 10V4.500h11v12H10M4 11.500h5.500V17z" strokeWidth="2" />, ''],
    ['删除图层', <path key="d" d="M2.500 5h15M7.500 5V2.500h5V5M4.500 5v13h11V5M7.500 7.500v8M10 7.500v8M12.500 7.500v8" strokeWidth="1.200" />, 'text-[#999]'],
];

const PercentField: React.FC<{ label: string }> = ({ label }) => (
    <label className="ml-auto flex items-center gap-[3px] text-[#858585]">
        {label}
        <span className="flex h-5 items-center rounded-xs border border-[#646464]">
            <input defaultValue="100%" disabled className="w-[39px] pl-[3px] font-['DejaVu_Sans',sans-serif] text-[11px] text-[#6f6f6f]" />
            <span className="flex h-full w-4 items-center justify-center border-l border-[#646464] text-[#6f6f6f]">
                <Chevron />
            </span>
        </span>
    </label>
);

const VisibilityCell = () => (
    <button aria-label="隐藏图层" className="flex h-full w-[30px] shrink-0 items-center justify-center border-r border-[#454545] pt-[3px]">
        <Eye />
    </button>
);

const LayersPanel = () => (
    <section className="absolute top-[46px] right-0 bottom-[6px] flex w-[247px] flex-col border border-t-2 border-[#383838] bg-[#535353] shadow">
        <div className="flex h-7 shrink-0 border-b border-[#383838] bg-[#424242]">
            {['图层', '通道', '路径'].map((tab, i) => (
                <button key={tab} className={`border-r border-[#383838] px-[9px] ${i === 0 ? '-mb-px bg-[#535353] text-white' : 'text-[#a0a0a0]'}`}>
                    {tab}
                </button>
            ))}
            <div className="ml-auto flex items-center gap-2 pr-[5px] text-[#c8c8c8]">
                <svg viewBox="0 0 10 8" className="h-2 w-[10px]" fill="none" stroke="currentColor" strokeWidth="1.300">
                    <path d="M1 .5L4.500 4 1 7.500M5.500.5L9 4 5.500 7.500" />
                </svg>
                <i className="h-3 w-px bg-[#8a8a8a]" />
                <button aria-label="面板菜单" className="flex w-[10px] flex-col gap-px">
                    <i className="h-px bg-current" /><i className="h-px bg-current" /><i className="h-px bg-current" /><i className="h-px bg-current" />
                </button>
            </div>
        </div>
        <div className="flex h-8 shrink-0 items-center border-b border-[#444] pt-[6px] pl-[3px]">
            <span className="relative flex items-center">
                <select aria-label="图层过滤" className="h-[23px] w-[88px] appearance-none rounded-xs border border-[#6a6a6a] bg-[#454545] pl-[22px] text-white">
                    <option>类型</option>
                    <option>名称</option>
                </select>
                <Glyph className="pointer-events-none absolute left-[7px] size-[14px]">
                    <circle cx="12" cy="8" r="5" strokeWidth="1.800" />
                    <path d="M8.500 11.500l-6 6" strokeWidth="2.200" />
                </Glyph>
                <Chevron className="pointer-events-none absolute right-[3px] size-2" />
            </span>
            <div className="flex flex-1 items-center justify-between pr-[3px] pl-[14px]">
                {filterIcons.map(([name, art]) => (
                    <button key={name} aria-label={name}>
                        <Glyph className="size-4">{art}</Glyph>
                    </button>
                ))}
                <button aria-label="打开或关闭图层过滤" className="flex h-[19px] w-[9px] items-start rounded-full bg-[#3c3c3c]">
                    <i className="size-[9px] rounded-full bg-[#dcdcdc]" />
                </button>
            </div>
        </div>
        <div className="flex h-7 shrink-0 items-center border-b border-[#444] pt-px pr-1 pl-[3px]">
            <span className="relative flex items-center text-[#6f6f6f]">
                <select aria-label="混合模式" disabled className="h-[23px] w-[119px] appearance-none rounded-xs border border-[#646464] bg-[#535353] pl-[9px] text-[#858585] opacity-100">
                    <option>正常</option>
                </select>
                <Chevron className="pointer-events-none absolute right-[3px] size-2" />
            </span>
            <PercentField label="不透明度:" />
        </div>
        <div className="flex h-[30px] shrink-0 items-start pt-1 pr-1 pl-[7px]">
            <span className="text-[#858585]">锁定：</span>
            <div className="mt-[2px] -ml-px flex gap-[7px] text-[#a0a0a0]">
                {lockIcons.map(([name, art]) => (
                    <button key={name} aria-label={name} disabled>
                        <Glyph className="size-[15px]">{art}</Glyph>
                    </button>
                ))}
            </div>
            <PercentField label="填充:" />
        </div>
        <div className="flex min-h-0 flex-1 bg-[#4a4a4a]">
            <ul className="flex-1 bg-[#4d4d4d] text-[11px] text-[#ececec]">
                <li className="flex h-10 items-center border-b border-[#454545] bg-[#535353]">
                    <div className="flex h-full w-[30px] shrink-0 items-center justify-center border-r border-[#454545]">
                        <button aria-label="显示图层" className="size-[13px] border border-[#656565] border-t-[#454545] border-l-[#454545]" />
                    </div>
                    <div className="ml-1 flex h-8 w-[10px] justify-center border border-[#222] bg-[repeating-linear-gradient(#fff_0_3px,#ccc_3px_6px)]">
                        <i className="w-1 bg-[#f00]" />
                    </div>
                    <span className="ml-[9px] pt-[2px]">Bootstrap-12Columns</span>
                </li>
                {groups.map((name) => (
                    <li key={name} className="flex h-[25px] items-center border-b border-[#454545] bg-[#535353]">
                        <VisibilityCell />
                        <button aria-label="展开组" className="ml-[5px] text-[#b8b8b8]">
                            <svg viewBox="0 0 5 11" className="h-[11px] w-[5px]" fill="none" stroke="currentColor">
                                <path d="M.8 .5l3 5-3 5" />
                            </svg>
                        </button>
                        <Glyph className="ml-[3px] size-5 text-[#dcdcdc]"><FolderShape /></Glyph>
                        <span className="ml-2 pt-[5px]">{name}</span>
                    </li>
                ))}
                <li className="flex h-[42px] items-center border-b border-[#454545] bg-[#535353]">
                    <VisibilityCell />
                    <div className="ml-1 flex h-8 w-8 flex-col border border-black bg-white">
                        <svg viewBox="0 0 30 8" className="mt-auto h-2 w-[30px] bg-[#c4c4c4]">
                            <path d="M0 .5h30M2 3.500h26" stroke="#111" />
                            <path d="M15 3l3 3.500h-6z" fill="#111" />
                        </svg>
                    </div>
                    <svg viewBox="0 0 8 14" className="ml-[3px] h-[14px] w-2" fill="none" stroke="#c8c8c8" strokeWidth="1.500">
                        <path d="M1 5.500V3.500a3 3 0 0 1 6 0v2M1 8.500v2a3 3 0 0 0 6 0v-2M4 4v6" />
                    </svg>
                    <div className="ml-1 h-8 w-[10px] border border-[#222] bg-white" />
                    <span className="ml-[9px] pt-[3px]">BG</span>
                    <Glyph className="mr-[13px] ml-auto size-4 text-[#dcdcdc]"><LockShape /></Glyph>
                </li>
            </ul>
            <div className="w-4 shrink-0" />
        </div>
        <div className="flex h-[25px] shrink-0 items-center justify-between border-t border-[#383838] pr-[26px] pl-[41px]">
            {actionIcons.map(([name, art, tone]) => (
                <button key={name} aria-label={name} className={tone}>
                    <Glyph className="size-4">{art}</Glyph>
                </button>
            ))}
        </div>
        <div className="flex h-2 shrink-0 items-center border-t-2 border-[#383838]"><Grip /></div>
    </section>
);

type DockItem = { name: string; art: React.ReactNode; active?: boolean };

const dock: DockItem[][] = [
    [
        {
            name: '库',
            art: (
                <g>
                    <path d="M6 17a5.500 5.500 0 0 1-.5-11A7 7 0 0 1 19 10a6.500 6.500 0 0 1-6 7z" fill="#a0a0a0" strokeWidth="1.600" />
                    <path d="M10 12.500L7.800 14A3 3 0 1 1 8 8.500l5 5.200a3.200 3.200 0 1 0 0-6.500c-1.500 0-2.500.8-3.200 2" stroke="#4a4a4a" strokeWidth="1.400" />
                </g>
            ),
        },
        { name: '学习', art: <g><path d="M7.500 13.500C7 11 4 9.500 4 6.500a6 6 0 0 1 12 0c0 3-3 4.500-3.500 7z" /><path {...solid} d="M7.500 14.500h5V17l-1.500 2.500h-2L7.500 17z" /></g> },
        { name: '颜色', art: <path {...solid} fillRule="evenodd" d="M10 3.500c5 0 9.500 2.500 9.500 6s-4.500 7-9 7c-2 0-2.500-1.500-1.500-3s-1-1.800-3-1.500c-3 .5-5.500-.5-5.500-2.500 0-3.500 4.500-6 9.500-6zM4.500 7.500v2h2.500v-2zM8 5v2h2.500V5zM12.500 5.500v2H15v-2zM14.500 9v2.500H17V9zM11.500 12v2.500H14V12z" /> },
        { name: '色板', art: <g><path {...solid} d="M2 2h6v6H2z" opacity=".6" /><path d="M2 2h16v16H2zM7.300 2v16M12.600 2v16M2 7.300h16M2 12.600h16" strokeWidth="1.300" /></g> },
    ],
    [
        { name: '属性', art: <g><path d="M2.500 5L7 2.500 11.500 5v5.500L7 13l-4.500-2.500zM2.500 5L7 7.500 11.500 5M7 7.500V13" fill="#8a8a8a" strokeWidth="1.200" /><path {...solid} d="M14 2h4v4h-4zM14 8h4v4h-4zM2 15h16v3.500H2z" /><path d="M13 16h3l-1.500 1.500z" fill="#444" stroke="none" /></g> },
        { name: '调整', art: <g transform="translate(-1 -1) scale(1.100)"><HalfCircleShape /></g> },
    ],
    [
        { name: '图层', active: true, art: <path {...solid} d="M10 1.500l9 5.500-9 5.500L1 7zM1 11.500l2.500-1.500 6.500 4 6.500-4 2.500 1.500-9 6z" /> },
        { name: '通道', art: <g stroke="none"><circle cx="10" cy="6.500" r="5.500" fill="#8a8a8a" /><circle cx="6.500" cy="12.500" r="5.500" fill="#dcdcdc" opacity=".85" /><circle cx="13.500" cy="12.500" r="5.500" fill="#b0b0b0" opacity=".8" /><circle cx="10" cy="10.500" r="2.800" fill="#454545" /></g> },
        { name: '路径', art: <g strokeWidth="1.300"><path d="M2 4h16M4 15c0-6 2-10 6-11 4 1 6 5 6 11" /><path {...solid} d="M0 2h4v4H0zM8 2h4v4H8zM16 2h4v4h-4z" /><path d="M2.500 14.500h3v3h-3zM14.500 14.500h3v3h-3z" fill="#535353" /></g> },
    ],
];

const Dock = () => (
    <aside className="flex w-[78px] shrink-0 flex-col border-r border-l-2 border-[#383838]">
        <div className="flex h-3 shrink-0 items-center justify-end border-b border-[#383838] bg-[#424242] pr-[5px]">
            <DoubleArrow flip />
        </div>
        {dock.map((items, g) => (
            <div key={g} className="flex flex-col gap-1 border-b border-[#383838] px-1 pt-[3px] pb-1">
                <div className="flex pb-px"><Grip /></div>
                {items.map((item) => (
                    <button
                        key={item.name}
                        className={`flex h-6 items-center gap-[9px] rounded-xs border pl-1 ${item.active ? 'border-[#626262] bg-[#353535] text-white' : 'border-transparent'}`}
                    >
                        <Glyph className="size-[19px]">{item.art}</Glyph>
                        {item.name}
                    </button>
                ))}
            </div>
        ))}
    </aside>
);

const App: React.FC = () => (
    <div className="flex h-screen min-h-[700px] flex-col border border-[#383838] bg-[#535353] px-[3px] pb-1 font-['Noto_Sans','Noto_Sans_CJK_SC',sans-serif] text-[12px] leading-4 text-[#dcdcdc] select-none">
        <MenuBar />
        <OptionsBar />
        <div className="flex min-h-0 flex-1 border-b border-[#383838]">
            <ToolBar />
            <i className="w-[2px] shrink-0 border-r border-[#383838] bg-[#424242]" />
            <div className="relative flex min-w-0 flex-1">
                <Workspace />
                <aside className="flex w-[39px] shrink-0 flex-col border-l border-[#383838]">
                    <div className="flex h-3 shrink-0 items-center justify-end border-b border-[#383838] bg-[#424242] pr-[7px]">
                        <DoubleArrow flip />
                    </div>
                    <div className="mt-[3px] flex"><Grip /></div>
                    <button aria-label="历史记录" className="mt-1 flex h-6 items-center justify-center">
                        <Glyph className="size-[18px]">
                            <path d="M3 2.500h4v4H3zM3 8.500h4v4H3z" />
                            <path d="M11 17c6-1.500 7-7 3-11.500" strokeWidth="2.200" />
                            <path {...solid} d="M2 14h6v5H2zM10 2.500h6.500L11 9z" />
                        </Glyph>
                    </button>
                </aside>
                <LayersPanel />
            </div>
            <Dock />
        </div>
    </div>
);

export default App;
